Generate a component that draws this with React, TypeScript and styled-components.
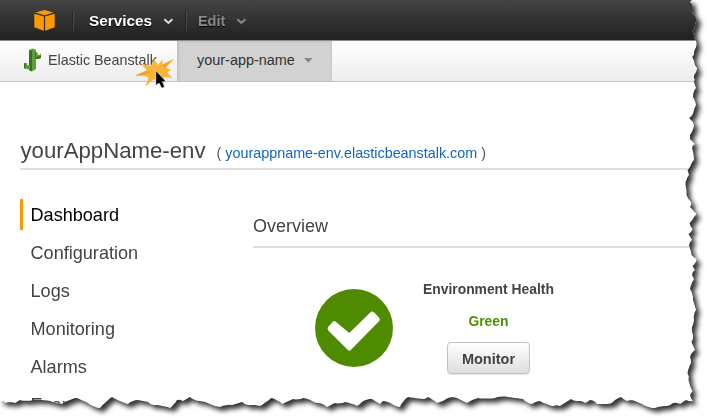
import React from 'react';
import styled, { createGlobalStyle } from 'styled-components';

const GlobalStyle = createGlobalStyle`
  * { box-sizing: border-box; }
  body {
    margin: 0;
    background: #fff;
    font-family: "Liberation Sans", Arial, sans-serif;
    overflow: hidden;
  }
`;

/* Outline of the torn sheet, clockwise along the right and bottom edges. */
const tornEdge =
  '690,2 692,4 692,11 695,16 697,20 695,25 692.5,31 694,35 696,41 696,47 694,52 692,57 694,61 697,68 696,72 693.5,77 694,82 696,88 693,97 696,105 693.5,112 689,118 693,122 694,126 690,135 690,139 ' +
  '692,141 695,144 692,148 694,160 690,167 687.5,170 689,175 685.5,185 686.5,195 691,202 690,207 696.5,214 694,217 689.5,223 692.5,229 688.5,234 692,240 689,246 691.5,255 696.5,259 692.5,266 695,270 692,275 694,279 ' +
  '690,289 693,300 696,310 694,320 692,327 693,335 691.5,342 695,350 690,357 691,363 687.5,373 688.5,380 690.5,387 692.5,391 690,395 693,401 ' +
  '686,400 680,404 673,403 667,406 655,408 642,404 635,401 627,401 621,397 614,401 607,404 597,404 590,400 585,403 580,401 571,399 560,406 553,406 540,401 532,404 523,399 508,397 495,398 478,398 467,403 ' +
  '463,401 457,398 448,398 437,403 428,397 422,399 408,397 400,407 392,404 383,401 380,404 372,399 362,402 357,406 345,402 335,403 327,407 318,403 312,401 303,398 293,399 282,404 271,398 260,406 250,405 242,402 232,405 ' +
  '220,407 210,404 200,401 190,397 183,401 177,400 170,408 155,405 148,402 138,400 128,404 112,397 100,408 88,403 77,398 62,404 50,401 33,400 20,400 15,403 5,403';

/* Splits long segments with small alternating nicks so the tear looks ragged. */
function ragged(source: string): string {
  const pts = source.split(' ').map((p) => p.split(',').map(Number));
  const out: string[] = [];
  pts.forEach(([x, y], i) => {
    out.push(`${x}px ${y}px`);
    const next = pts[i + 1];
    if (!next) return;
    const dx = next[0] - x;
    const dy = next[1] - y;
    const len = Math.hypot(dx, dy);
    const n = Math.floor(len / 2.5);
    for (let k = 1; k < n; k++) {
      const off = (((i * 7 + k * 5) % 5) - 2) * 0.4;
      const px = x + (dx * k) / n - (dy / len) * off;
      const py = y + (dy * k) / n + (dx / len) * off;
      out.push(`${px.toFixed(1)}px ${py.toFixed(1)}px`);
    }
  });
  return out.join(', ');
}

const sheetClip = `polygon(0px 0px, 692px 0px, ${ragged(tornEdge)}, 4px 401px, 0px 401px)`;

const Frame = styled.div`
  width: 707px;
  height: 418px;
  overflow: hidden;
  filter: drop-shadow(4.5px 4.5px 2.5px rgba(0, 0, 0, 0.8));
`;

const Sheet = styled.main`
  width: 707px;
  height: 418px;
  background: #fff;
  clip-path: ${sheetClip};
`;

const TopBar = styled.header`
  display: flex;
  align-items: center;
  height: 40px;
  padding: 1px 0 0 34px;
  background: linear-gradient(#444, #202020);
`;

const BarDivider = styled.span<{ $left: number; $right: number }>`
  width: 2px;
  height: 20px;
  margin: 0 ${(p) => p.$right}px 0 ${(p) => p.$left}px;
  background: #242424;
  border-right: 1px solid #4a4a4a;
`;

const BarItem = styled.span<{ $muted?: boolean }>`
  display: flex;
  align-items: center;
  gap: 11px;
  padding-top: 1px;
  font-size: ${(p) => (p.$muted ? 14.5 : 15.3)}px;
  font-weight: bold;
  line-height: 20px;
  color: ${(p) => (p.$muted ? '#8b8b8b' : '#fff')};
  text-shadow: 0 1px 1px #000;
`;

const ServiceBar = styled.nav`
  display: flex;
  height: 42px;
  background: linear-gradient(#fff, #ececec);
  border-top: 1px solid #8a8a8a;
  border-bottom: 1px solid #c4c4c4;
`;

const ServiceTab = styled.div`
  display: flex;
  align-items: center;
  width: 177px;
  padding: 0 0 2px 23px;
  gap: 6px;
  font-size: 14.3px;
  color: #444;
  position: relative;
`;

const AppTab = styled.div`
  display: flex;
  align-items: center;
  width: 155px;
  padding: 0 0 2px 19px;
  gap: 9px;
  font-size: 14.45px;
  color: #333;
  background: #d2d2d2;
  border-left: 1px solid #c2c2c2;
  border-right: 1px solid #c8c8c8;
  box-shadow: inset 1px 1px 2px rgba(0, 0, 0, 0.08);
`;

const Burst = styled.svg`
  position: absolute;
  left: 134px;
  top: 16px;
  z-index: 1;
`;

const TitleRow = styled.div`
  display: flex;
  align-items: baseline;
  gap: 11px;
  height: 88px;
  margin-left: 20px;
  padding: 56px 0 0 0.5px;
  border-bottom: 2px solid #dedede;
`;

const Title = styled.h1`
  margin: 0;
  font-size: 22.2px;
  font-weight: normal;
  line-height: 26px;
  color: #444;
`;

const Address = styled.span`
  font-size: 14.36px;
  color: #555;
  white-space: pre;
`;

const Link = styled.a`
  color: #1166bb;
`;

const Body = styled.div`
  display: flex;
`;

const SideNav = styled.nav`
  width: 253px;
  padding: 29px 0 0 20px;
`;

const NavItem = styled.div<{ $active?: boolean }>`
  height: 38px;
  font-size: 18.1px;
  color: ${(p) => (p.$active ? '#000' : '#444')};
  span {
    display: block;
    height: 31px;
    line-height: 32px;
    padding-left: 7.5px;
    border-left: 3px solid ${(p) => (p.$active ? '#f90' : 'transparent')};
  }
`;

const Content = styled.section`
  flex: 1;
`;

const SectionTitle = styled.h2`
  height: 78px;
  margin: 0;
  padding-top: 45px;
  border-bottom: 2px solid #dedede;
  font-size: 18px;
  font-weight: normal;
  line-height: 22px;
  color: #444;
`;

const Health = styled.div`
  display: flex;
  padding: 41px 0 0 62px;
  gap: 29px;
`;

const HealthInfo = styled.div`
  display: flex;
  flex-direction: column;
  align-items: center;
  margin-top: -8px;
  font-size: 13.87px;
  font-weight: bold;
  line-height: 16px;
  color: #444;
`;

const Status = styled.span`
  margin-top: 16px;
  color: #4b9000;
`;

const MonitorButton = styled.button`
  width: 83px;
  height: 32px;
  margin-top: 13px;
  padding: 1px 0 0;
  border: 1px solid #c2c2c2;
  border-radius: 4px;
  background: linear-gradient(#fff, #dedede);
  box-shadow: 0 1px 1px rgba(0, 0, 0, 0.1);
  font: bold 14.5px "Liberation Sans", Arial, sans-serif;
  color: #444;
`;

const Cube = () => (
  <svg width="21" height="21" viewBox="0 0 21 21" fill="#ff9900">
    <path d="M10.5 0 19.5 2.4 10.5 5.2 1.5 2.4z" />
    <path d="M0.3 3.7 9.9 6.6V20.7L0.3 17.2z" />
    <path d="M20.7 3.7 11.1 6.6V20.7L20.7 17.2z" />
  </svg>
);

const Beanstalk = () => (
  <svg width="19" height="24" viewBox="0 0 19 24">
    <path d="M6 2 9 0.5 13 1.5V21L9 23.5 6 22z" fill="#5f9e3a" />
    <path d="M6 2 9 3V23.5L6 22z" fill="#39701f" />
    <path d="M12 5 14 4V7H18V10L16 11H12z" fill="#3f7524" />
    <path d="M13 4.5 15 5V7.5L18 5.5V7.5L13 9z" fill="#6aa83c" />
    <path d="M1 15H4V17H7V20L5 21.5 1 20z" fill="#5f9e3a" />
    <path d="M1 15 2.5 16V21L1 20z" fill="#39701f" />
  </svg>
);

const Chevron = ({ color }: { color: string }) => (
  <svg width="11" height="7" viewBox="0 0 11 7">
    <path d="M1.4 1.2 5.4 4.9 9.4 1.2" fill="none" stroke={color} strokeWidth="2" />
  </svg>
);

const Caret = () => (
  <svg width="9" height="5" viewBox="0 0 9 5">
    <path d="M0 0H8.6L4.3 4.8z" fill="#888" />
  </svg>
);

const ClickMark = () => (
  <Burst width="42" height="34" viewBox="0 0 42 34">
    <path
      d="M1 18.5 13 13.5 6.5 6.5 17 9 20 2 24 8 28.5 2.5 28.5 7.5 40 2 32 10.5 37 13 33 15.5 38 21 30 20 30 31.5 24 25 20 22 11.5 29.5 14.5 20.5 9 18.5z"
      fill="#fbb536"
    />
    <path d="M1 18.5 13 13.5 17 15 9 18.5zM40 2 30 11.5 28 8z" fill="#eda532" />
    <path
      d="M21.8 13.5V28.5L25 26 27.8 31.2 30.6 29.7 28.4 24.8H32.2z"
      fill="#000"
      stroke="#fff"
      strokeWidth="0.6"
    />
  </Burst>
);

const CheckBadge = () => (
  <svg width="79" height="79" viewBox="0 0 79 79">
    <circle cx="39" cy="39" r="39" fill="#4f8b00" />
    <path
      d="M20.5 32.5 34.3 44 55.5 23.2Q57.3 21.8 59 23.3L64 28.4Q65.8 30.4 64 32.3L36 60.8Q34.3 62.6 32.6 60.8L13.3 41.4Q11.8 39.6 13.3 37.8L17.8 32.8Q19.2 31.5 20.5 32.5z"
      fill="#fff"
    />
  </svg>
);

const navItems = ['Dashboard', 'Configuration', 'Logs', 'Monitoring', 'Alarms', 'Events'];

export default function App() {
  return (
    <>
      <GlobalStyle />
      <Frame>
        <Sheet>
          <TopBar>
            <Cube />
            <BarDivider $left={17} $right={15} />
            <BarItem>
              Services <Chevron color="#ddd" />
            </BarItem>
            <BarDivider $left={11} $right={11} />
            <BarItem $muted>
              Edit <Chevron color="#8b8b8b" />
            </BarItem>
          </TopBar>
          <ServiceBar>
            <ServiceTab>
              <Beanstalk />
              Elastic Beanstalk
              <ClickMark />
            </ServiceTab>
            <AppTab>
              your-app-name <Caret />
            </AppTab>
          </ServiceBar>
          <TitleRow>
            <Title>yourAppName-env</Title>
            <Address>
              ( <Link>yourappname-env.elasticbeanstalk.com</Link> )
            </Address>
          </TitleRow>
          <Body>
            <SideNav>
              {navItems.map((item, i) => (
                <NavItem key={item} $active={i === 0}>
                  <span>{item}</span>
                </NavItem>
              ))}
            </SideNav>
            <Content>
              <SectionTitle>Overview</SectionTitle>
              <Health>
                <CheckBadge />
                <HealthInfo>
                  Environment Health
                  <Status>Green</Status>
                  <MonitorButton>Monitor</MonitorButton>
                </HealthInfo>
              </Health>
            </Content>
          </Body>
        </Sheet>
      </Frame>
    </>
  );
}
